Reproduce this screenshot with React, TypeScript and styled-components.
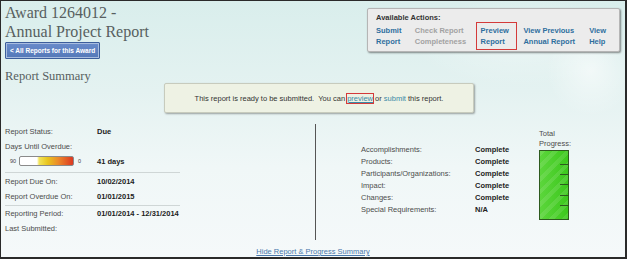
import React from 'react';
import styled, { createGlobalStyle } from 'styled-components';

const GlobalStyle = createGlobalStyle`
  html, body {
    margin: 0;
    padding: 0;
    background: #ffffff;
  }
  * {
    box-sizing: border-box;
  }
`;

const Page = styled.div`
  width: 627px;
  height: 259px;
  overflow: hidden;
  border: 1px solid #2a2a2a;
  border-right-width: 2px;
  border-bottom-width: 2px;
  font-family: 'Liberation Sans', Arial, sans-serif;
  font-size: 7.5px;
  color: #4a4a4a;
  background:
    radial-gradient(circle at 590px 70px, rgba(255, 255, 255, 0.55) 0, rgba(255, 255, 255, 0) 45px),
    radial-gradient(ellipse at 520px 40px, rgba(255, 255, 255, 0.35) 0, rgba(255, 255, 255, 0) 110px),
    linear-gradient(180deg, #d9eeec 0%, #e4f2f1 35%, #f0f7f7 65%, #f5f9fa 100%);
  display: flex;
  flex-direction: column;
`;

const Header = styled.header`
  display: flex;
  justify-content: space-between;
  align-items: flex-start;
  padding: 0 5px 0 4px;
`;

const TitleBlock = styled.div`
  display: flex;
  flex-direction: column;
  align-items: flex-start;
`;

const Title = styled.h1`
  margin: 2px 0 0;
  font-family: 'Liberation Serif', 'Times New Roman', serif;
  font-weight: 400;
  font-size: 16px;
  line-height: 19px;
  color: #575f60;
`;

const BackButton = styled.button`
  margin-top: 1px;
  height: 17px;
  padding: 0 4px;
  border: 1px solid #3c5e9c;
  border-radius: 1px;
  background: linear-gradient(180deg, #6a8ccb 0%, #5478b8 100%);
  color: #ffffff;
  font-family: 'Liberation Sans', Arial, sans-serif;
  font-weight: 700;
  font-size: 6.5px;
  box-shadow: 0 0 0 1px #a9bddf inset;
`;

const ActionsBox = styled.div`
  margin-top: 7px;
  width: 253px;
  height: 44px;
  padding: 4px 0 0 8px;
  background: #ececec;
  border: 1px solid #b5b5b5;
  border-radius: 2px;
  box-shadow: 1px 1px 2px rgba(0, 0, 0, 0.45);
`;

const ActionsTitle = styled.div`
  font-weight: 700;
  font-size: 7.5px;
  color: #333;
  line-height: 10px;
`;

const ActionsRow = styled.div`
  display: flex;
  margin-top: 2px;
`;

const Action = styled.a<{ $w: number; $disabled?: boolean; $boxed?: boolean }>`
  width: ${({ $w }) => $w}px;
  display: block;
  font-weight: 700;
  font-size: 7.5px;
  line-height: 11px;
  color: ${({ $disabled }) => ($disabled ? '#a2a2a2' : '#2e6f9e')};
  text-decoration: none;
  position: relative;
  &::after {
    content: '';
    display: ${({ $boxed }) => ($boxed ? 'block' : 'none')};
    position: absolute;
    left: -5px;
    top: -3px;
    width: 39px;
    height: 26px;
    border: 1.5px solid #d43a3a;
  }
`;

const SummaryBar = styled.div`
  display: grid;
  grid-template-columns: 159px 310px 1fr;
  padding-left: 4px;
`;

const SectionTitle = styled.h2`
  margin: 8px 0 0;
  font-family: 'Liberation Serif', 'Times New Roman', serif;
  font-weight: 400;
  font-size: 12.5px;
  line-height: 18px;
  color: #575f60;
`;

const Notice = styled.div`
  margin-top: 24px;
  height: 30px;
  background: #eef2e4;
  border: 1px solid #c7cbbd;
  border-radius: 2px;
  box-shadow: 1px 1px 2px rgba(0, 0, 0, 0.35);
  display: flex;
  align-items: center;
  justify-content: center;
  font-size: 7.5px;
  color: #333;
  white-space: pre;
`;

const NoticeLink = styled.a<{ $boxed?: boolean }>`
  color: #3a8aa6;
  text-decoration: ${({ $boxed }) => ($boxed ? 'underline' : 'none')};
  outline: ${({ $boxed }) => ($boxed ? '1.5px solid #d43a3a' : 'none')};
  outline-offset: 0;
`;

const Summary = styled.section`
  display: grid;
  grid-template-columns: 314px 1px 1fr;
  height: 116px;
  margin-top: 11px;
`;

const LeftCol = styled.div`
  padding: 0 0 0 4px;
`;

const Divider = styled.div`
  background: #555;
`;

const InfoRow = styled.div`
  display: flex;
  height: 15px;
  line-height: 15px;
`;

const Label = styled.span<{ $w: number }>`
  width: ${({ $w }) => $w}px;
  flex-shrink: 0;
  color: #4c4c4c;
`;

const Value = styled.span`
  font-weight: 700;
  color: #222;
`;

const Rule = styled.hr<{ $mt: number; $mb: number }>`
  width: 175px;
  margin: ${({ $mt, $mb }) => `${$mt}px 0 ${$mb}px`};
  border: 0;
  border-top: 1px solid #cfd6d6;
`;

const GaugeRow = styled.div`
  display: flex;
  align-items: center;
  height: 14px;
  padding-left: 5px;
`;

const GaugeEnd = styled.span<{ $w: number }>`
  width: ${({ $w }) => $w}px;
  font-size: 5.5px;
  color: #444;
`;

const Gauge = styled.div`
  width: 55px;
  height: 10px;
  border: 1px solid #8a8a8a;
  border-radius: 2px;
  margin-right: 4px;
  background: linear-gradient(90deg, #ffffff 0%, #ffffff 32%, #f2e45a 36%, #e8c51e 52%, #ec8a2a 72%, #dc3822 100%);
`;

const RightCol = styled.div`
  display: flex;
  align-items: flex-start;
  padding: 5px 0 0 45px;
`;

const StatusTable = styled.div`
  margin-top: 15px;
  width: 178px;
`;

const StatusRow = styled.div`
  display: flex;
  height: 12px;
  line-height: 12px;
`;

const ProgressBlock = styled.div`
  display: flex;
  flex-direction: column;
`;

const ProgressLabel = styled.div`
  line-height: 10px;
  color: #4c4c4c;
`;

const ProgressBar = styled.div`
  margin-top: 1px;
  width: 30px;
  height: 70px;
  border: 1.5px solid #2d5a1e;
  background:
    repeating-linear-gradient(135deg, rgba(255, 255, 255, 0.1) 0 4px, rgba(255, 255, 255, 0) 4px 9px),
    linear-gradient(90deg, #5cd63c 0%, #3cc81c 100%);
  display: flex;
  flex-direction: column;
  justify-content: space-evenly;
  align-items: flex-end;
  padding: 4px 0;
`;

const Tick = styled.div`
  width: 8px;
  height: 1px;
  background: #2d5a1e;
`;

const Footer = styled.div`
  display: flex;
  justify-content: center;
  margin-top: 6px;
`;

const FooterLink = styled.a`
  color: #4a78aa;
  text-decoration: underline;
  font-size: 7.5px;
  line-height: 11px;
`;

const actions = [
  { w: 39, text: ['Submit', 'Report'] },
  { w: 66, text: ['Check Report', 'Completeness'], disabled: true },
  { w: 43, text: ['Preview', 'Report'], boxed: true },
  { w: 66, text: ['View Previous', 'Annual Report'] },
  { w: 30, text: ['View', 'Help'] },
];

const statuses = [
  ['Accomplishments:', 'Complete'],
  ['Products:', 'Complete'],
  ['Participants/Organizations:', 'Complete'],
  ['Impact:', 'Complete'],
  ['Changes:', 'Complete'],
  ['Special Requirements:', 'N/A'],
];

const App = () => {
  return (
    <Page>
      <GlobalStyle />
      <Header>
        <TitleBlock>
          <Title>
            Award 1264012 -
            <br />
            Annual Project Report
          </Title>
          <BackButton>&lt; All Reports for this Award</BackButton>
        </TitleBlock>
        <ActionsBox>
          <ActionsTitle>Available Actions:</ActionsTitle>
          <ActionsRow>
            {actions.map((a) => (
              <Action key={a.text[0]} $w={a.w} $disabled={a.disabled} $boxed={a.boxed}>
                {a.text[0]}
                <br />
                {a.text[1]}
              </Action>
            ))}
          </ActionsRow>
        </ActionsBox>
      </Header>

      <SummaryBar>
        <SectionTitle>Report Summary</SectionTitle>
        <Notice>
          This report is ready to be submitted.  You can <NoticeLink $boxed>preview</NoticeLink> or{' '}
          <NoticeLink>submit</NoticeLink> this report.
        </Notice>
      </SummaryBar>

      <Summary>
        <LeftCol>
          <InfoRow>
            <Label $w={92}>Report Status:</Label>
            <Value>Due</Value>
          </InfoRow>
          <InfoRow>
            <Label $w={92}>Days Until Overdue:</Label>
          </InfoRow>
          <GaugeRow>
            <GaugeEnd $w={9}>90</GaugeEnd>
            <Gauge />
            <GaugeEnd $w={19}>0</GaugeEnd>
            <Value>41 days</Value>
          </GaugeRow>
          <Rule $mt={4} $mb={1} />
          <InfoRow>
            <Label $w={92}>Report Due On:</Label>
            <Value>10/02/2014</Value>
          </InfoRow>
          <InfoRow>
            <Label $w={92}>Report Overdue On:</Label>
            <Value>01/01/2015</Value>
          </InfoRow>
          <Rule $mt={1} $mb={0} />
          <InfoRow>
            <Label $w={92}>Reporting Period:</Label>
            <Value>01/01/2014 - 12/31/2014</Value>
          </InfoRow>
          <InfoRow>
            <Label $w={92}>Last Submitted:</Label>
          </InfoRow>
        </LeftCol>
        <Divider />
        <RightCol>
          <StatusTable>
            {statuses.map(([label, value]) => (
              <StatusRow key={label}>
                <Label $w={114}>{label}</Label>
                <Value>{value}</Value>
              </StatusRow>
            ))}
          </StatusTable>
          <ProgressBlock>
            <ProgressLabel>
              Total
              <br />
              Progress:
            </ProgressLabel>
            <ProgressBar>
              {[0, 1, 2, 3, 4].map((i) => (
                <Tick key={i} />
              ))}
            </ProgressBar>
          </ProgressBlock>
        </RightCol>
      </Summary>

      <Footer>
        <FooterLink>Hide Report &amp; Progress Summary</FooterLink>
      </Footer>
    </Page>
  );
};

export default App;
